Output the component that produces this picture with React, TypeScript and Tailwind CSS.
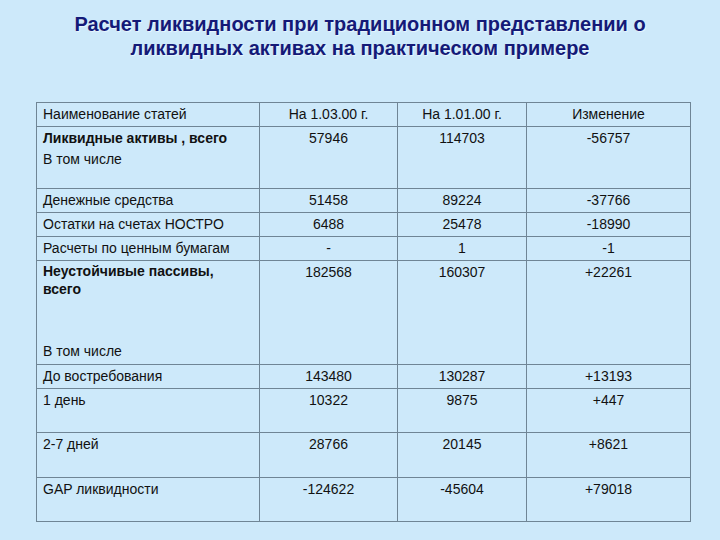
const rows: {
  label: React.ReactNode;
  a: string;
  b: string;
  c: string;
  h: string;
}[] = [
  { label: "Наименование статей", a: "На 1.03.00 г.", b: "На 1.01.00 г.", c: "Изменение", h: "h-[24px]" },
  {
    label: (
      <>
        <div className="font-bold">Ликвидные активы , всего</div>
        <div>В том числе</div>
      </>
    ),
    a: "57946",
    b: "114703",
    c: "-56757",
    h: "h-[62px]",
  },
  { label: "Денежные средства", a: "51458", b: "89224", c: "-37766", h: "h-[24px]" },
  { label: "Остатки на счетах НОСТРО", a: "6488", b: "25478", c: "-18990", h: "h-[24px]" },
  { label: "Расчеты по ценным бумагам", a: "-", b: "1", c: "-1", h: "h-[24px]" },
  {
    label: (
      <div className="flex h-full flex-col justify-between pb-[2px]">
        <div className="font-bold leading-[18px]">
          Неустойчивые пассивы,
          <br />
          всего
        </div>
        <div>В том числе</div>
      </div>
    ),
    a: "182568",
    b: "160307",
    c: "+22261",
    h: "h-[104px]",
  },
  { label: "До востребования", a: "143480", b: "130287", c: "+13193", h: "h-[24px]" },
  { label: "1 день", a: "10322", b: "9875", c: "+447", h: "h-[44px]" },
  { label: "2-7 дней", a: "28766", b: "20145", c: "+8621", h: "h-[45px]" },
  { label: "GAP ликвидности", a: "-124622", b: "-45604", c: "+79018", h: "h-[44px]" },
];

export default function App() {
  return (
    <div className="h-[540px] w-[720px] overflow-hidden bg-[#cde9fa] font-['Liberation_Sans',Arial,sans-serif] text-[#111]">
      {/* Title */}
      <h1 className="pt-[12px] text-center text-[20px] font-bold leading-[24px] text-[#141a78] [text-shadow:1px_1px_1px_rgba(255,255,255,0.6)]">
        Расчет ликвидности при традиционном представлении о
        <br />
        ликвидных активах на практическом примере
      </h1>

      {/* Table */}
      <div className="ml-[36px] mt-[42px] w-[655px] border border-b-0 border-[#6f8595] text-[14px] leading-[21px]">
        {rows.map((r, i) => (
          <div
            key={i}
            className={`grid grid-cols-[223px_138px_129px_163px] border-b border-[#6f8595] ${r.h}`}
          >
            <div className="h-full border-r border-[#6f8595] pl-[6px] pt-[1px]">{r.label}</div>
            <div className="border-r border-[#6f8595] pt-[1px] text-center">{r.a}</div>
            <div className="border-r border-[#6f8595] pt-[1px] text-center">{r.b}</div>
            <div className="pt-[1px] text-center">{r.c}</div>
          </div>
        ))}
      </div>
    </div>
  );
}
